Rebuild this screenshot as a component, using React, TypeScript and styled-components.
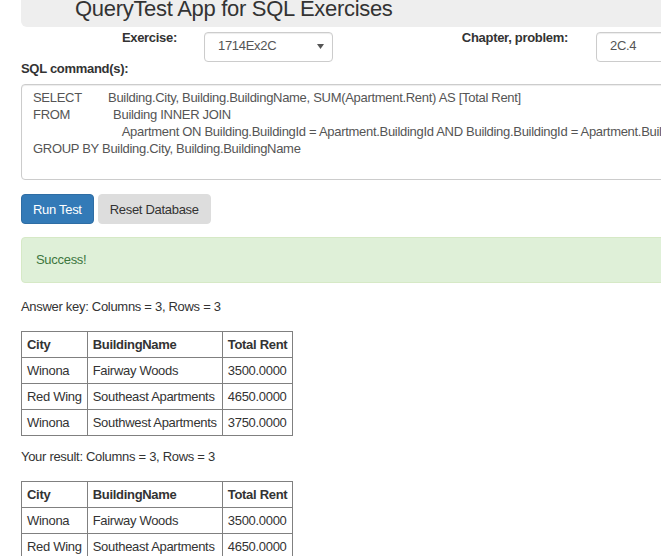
import styled, { createGlobalStyle } from 'styled-components';

const GlobalStyle = createGlobalStyle`
	html, body {
		margin: 0;
		overflow: hidden;
		background: #fff;
	}
	body {
		font-family: "Liberation Sans", Arial, sans-serif;
		font-size: 13px;
		letter-spacing: -0.3px;
		color: #333;
	}
`

const Page = styled.div`
	width: 1100px;
	padding-left: 21px;
`

const Jumbotron = styled.header`
	margin-top: -2px;
	background-color: #eee;
	border-radius: 0 0 6px 6px;
	padding: 0 54px 7px;
`

const Title = styled.h1`
	margin: 0;
	font-size: 22px;
	font-weight: normal;
	line-height: 22px;
	letter-spacing: -0.3px;
	color: #333;
`

const FormRow = styled.div`
	display: flex;
	align-items: flex-start;
	margin-top: 1px;
`

const FieldLabel = styled.label<{ $width: number; $gap: number }>`
	box-sizing: border-box;
	width: ${props => props.$width}px;
	padding-right: ${props => props.$gap}px;
	text-align: right;
	font-weight: bold;
	line-height: 20px;
`

const Field = styled.div<{ $width: number }>`
	box-sizing: border-box;
	display: flex;
	justify-content: space-between;
	width: ${props => props.$width}px;
	height: 30px;
	margin-top: 4px;
	padding: 4px 8px 0 13px;
	line-height: 17px;
	color: #555;
	background: #fff;
	border: 1px solid #ccc;
	border-radius: 4px;
	box-shadow: inset 0 1px 1px rgba(0, 0, 0, .075);
`

const Caret = styled.svg`
	margin-top: 7px;
	fill: #555;
`

const BlockLabel = styled.label`
	display: block;
	margin: -3px 0 5px;
	font-weight: bold;
	line-height: 20px;
`

const SqlBox = styled.textarea`
	display: block;
	box-sizing: border-box;
	width: 1000px;
	height: 96px;
	margin: 0;
	padding: 4px 11px;
	font-family: inherit;
	font-size: 13px;
	letter-spacing: -0.3px;
	line-height: 17px;
	color: #555;
	border: 1px solid #ccc;
	border-radius: 4px;
	box-shadow: inset 0 1px 1px rgba(0, 0, 0, .075);
	resize: none;
	overflow: hidden;
	white-space: pre;
`

const ButtonBar = styled.div`
	display: flex;
	gap: 4px;
	margin-top: 14px;
`

const Button = styled.button<{ $primary?: boolean }>`
	height: 30px;
	padding: 0 11px;
	font-family: inherit;
	font-size: 13px;
	letter-spacing: -0.3px;
	border-radius: 4px;
	border: 1px solid ${props => props.$primary ? '#2e6da4' : '#ddd'};
	background-color: ${props => props.$primary ? '#337ab7' : '#ddd'};
	color: ${props => props.$primary ? '#fff' : '#333'};
	cursor: pointer;
`

const Alert = styled.div`
	margin: 13px 0 14px;
	padding: 12px 14px;
	line-height: 20px;
	color: #3c763d;
	background-color: #dff0d8;
	border: 1px solid #d6e9c6;
	border-radius: 4px;
`

const Caption = styled.p`
	margin: 11px 0 14px;
	line-height: 20px;
`

const ResultTable = styled.table`
	border-collapse: collapse;
	margin: 0;
	th, td {
		border: 1px solid #808080;
		padding: 3px 5px;
		line-height: 19px;
		text-align: left;
		white-space: nowrap;
	}
	th {
		font-weight: bold;
	}
`

const sql = [
	'SELECT        Building.City, Building.BuildingName, SUM(Apartment.Rent) AS [Total Rent]',
	'FROM             Building INNER JOIN',
	'                           Apartment ON Building.BuildingId = Apartment.BuildingId AND Building.BuildingId = Apartment.BuildingId',
	'GROUP BY Building.City, Building.BuildingName',
].join('\n');

const columns = ['City', 'BuildingName', 'Total Rent'];

const rows = [
	['Winona', 'Fairway Woods', '3500.0000'],
	['Red Wing', 'Southeast Apartments', '4650.0000'],
	['Winona', 'Southwest Apartments', '3750.0000'],
];

function Results({ label }: { label: string }) {
	return (
		<>
			<Caption>{label}: Columns = {columns.length}, Rows = {rows.length}</Caption>
			<ResultTable>
				<thead>
					<tr>{columns.map(c => <th key={c}>{c}</th>)}</tr>
				</thead>
				<tbody>
					{rows.map((r, i) => (
						<tr key={i}>{r.map((v, j) => <td key={j}>{v}</td>)}</tr>
					))}
				</tbody>
			</ResultTable>
		</>
	)
}

function App() {
	return (
		<Page>
			<GlobalStyle />
			<Jumbotron>
				<Title>QueryTest App for SQL Exercises</Title>
			</Jumbotron>
			<FormRow>
				<FieldLabel $width={183} $gap={27}>Exercise:</FieldLabel>
				<Field $width={129}>
					<span>1714Ex2C</span>
					<Caret width="7" height="5" viewBox="0 0 7 5"><path d="M0 0h7L3.5 5z" /></Caret>
				</Field>
				<FieldLabel $width={263} $gap={28}>Chapter, problem:</FieldLabel>
				<Field $width={129}>
					<span>2C.4</span>
				</Field>
			</FormRow>
			<BlockLabel>SQL command(s):</BlockLabel>
			<SqlBox wrap="off" defaultValue={sql} />
			<ButtonBar>
				<Button $primary>Run Test</Button>
				<Button>Reset Database</Button>
			</ButtonBar>
			<Alert>Success!</Alert>
			<Results label="Answer key" />
			<Results label="Your result" />
		</Page>
	)
}

export default App;
